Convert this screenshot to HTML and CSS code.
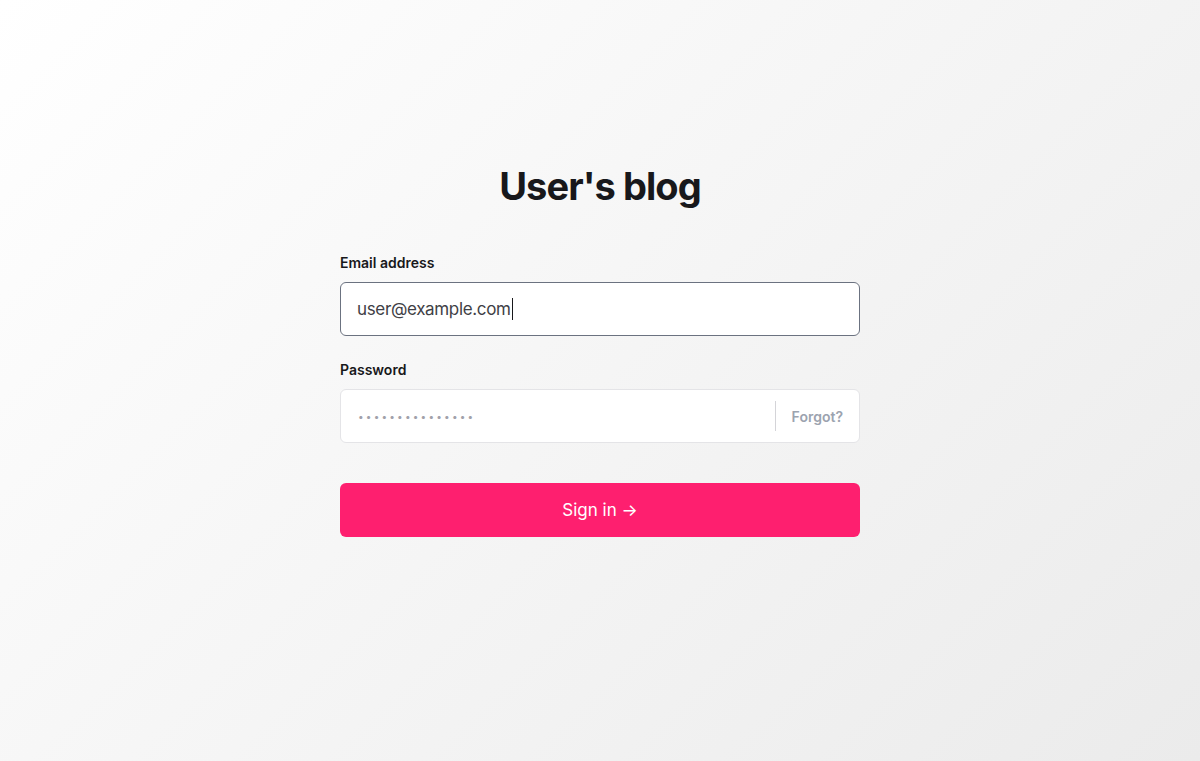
FILE: index.html
```html
<!DOCTYPE html>
<html lang="en">
<head>
<meta charset="utf-8">
<title>User's blog – Sign in</title>
<link rel="stylesheet" href="styles.css">
</head>
<body>
<main class="page">
  <form class="card">
    <h1 class="title">User's blog</h1>
    <div class="field">
      <label class="label">Email address</label>
      <div class="input input--focus"><span class="value">user@example.com</span><span class="caret"></span></div>
    </div>
    <div class="field">
      <label class="label">Password</label>
      <div class="input input--pw">
        <span class="dots">•••••••••••••••</span>
        <span class="divider"></span>
        <span class="forgot">Forgot?</span>
      </div>
    </div>
    <button type="button" class="btn">Sign in →</button>
  </form>
</main>
</body>
</html>
```
FILE: styles.css
```css
* { box-sizing: border-box; }
html, body { margin: 0; height: 100%; }
body {
  font-family: Inter, "Noto Sans", sans-serif;
  background: linear-gradient(135deg, #ffffff 0%, #ebebeb 100%);
  color: #18181b;
}
.page {
  height: 761px;
  display: flex;
  justify-content: center;
  padding-top: 161px;
}
.card {
  width: 520px;
  display: flex;
  flex-direction: column;
}
.title {
  margin: 0 0 42px;
  text-align: center;
  font-size: 38px;
  line-height: 50px;
  font-weight: 700;
  letter-spacing: -0.9px;
  color: #18181b;
}
.field { display: flex; flex-direction: column; margin-bottom: 24px; }
.label {
  font-size: 14px;
  line-height: 20px;
  font-weight: 600;
  color: #18181b;
  margin-bottom: 9px;
}
.input {
  height: 54px;
  background: #fff;
  border: 1px solid #e4e4e7;
  border-radius: 6px;
  display: flex;
  align-items: center;
  padding: 0 16px;
}
.input--focus { border-color: #6b7280; }
.value { font-size: 17px; letter-spacing: -0.35px; color: #3f3f46; }
.caret { width: 1px; height: 22px; background: #18181b; margin-left: 1px; }
.input--pw { padding-right: 0; }
.dots {
  flex: 1;
  font-size: 10px;
  letter-spacing: 2.2px;
  color: #a1a1aa;
  padding-left: 1px;
}
.divider { width: 1px; height: 30px; background: #d4d4d8; }
.forgot {
  font-size: 14px;
  font-weight: 600;
  color: #9ca3af;
  padding: 0 16px;
}
.btn {
  margin-top: 16px;
  height: 54px;
  border: 0;
  border-radius: 6px;
  background: #fe1f6f;
  color: #fff;
  font-family: Inter, "Noto Sans", sans-serif;
  font-size: 17px;
  font-weight: 400;
}
```
